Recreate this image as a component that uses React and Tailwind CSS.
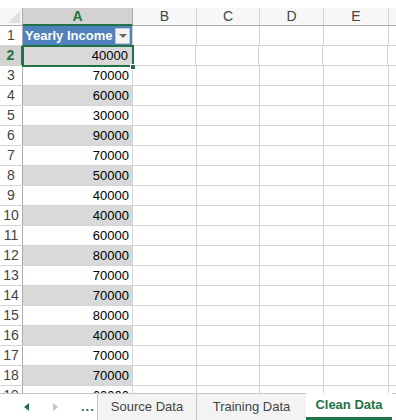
import React from "react";

const values = [
  40000, 70000, 60000, 30000, 90000, 70000, 50000, 40000, 40000, 60000, 80000,
  70000, 70000, 80000, 40000, 70000, 70000, 60000,
];

const cols = ["B", "C", "D", "E"];
const colWidths = ["w-[64px]", "w-[63px]", "w-[64px]", "w-[65px]"];

const HeaderRow = () => (
  <div className="flex h-[18px] shrink-0 border-b border-[#ababab] bg-[#f7f7f7]">
    <div className="relative w-[23px] shrink-0 border-r border-[#ababab]">
      <div className="absolute right-[2px] bottom-[2px] w-0 h-0 border-l-[12px] border-l-transparent border-b-[12px] border-b-[#dfdfdf]" />
    </div>
    <div className="w-[110px] shrink-0 flex items-center justify-center bg-[#d2d2d2] text-[#217346] font-bold border-r border-[#ababab] border-b-2 border-b-[#217346] -mb-px text-[14px]">
      A
    </div>
    {cols.map((c, i) => (
      <div
        key={c}
        className={`${colWidths[i]} shrink-0 flex items-center justify-center border-r border-[#d4d4d4] text-[#444] text-[14px]`}
      >
        {c}
      </div>
    ))}
    <div className="flex-1" />
  </div>
);

const Row = ({ num, children, striped, active }) => (
  <div className="flex h-[20px] shrink-0 border-b border-[#d4d4d4]">
    <div
      className={`w-[23px] shrink-0 flex items-center justify-center text-[14px] border-r ${
        active
          ? "bg-[#d2d2d2] text-[#217346] font-bold border-r-2 border-r-[#217346] -mr-px"
          : "text-[#444] border-[#ababab]"
      }`}
    >
      {num}
    </div>
    <div
      className={`w-[110px] shrink-0 border-r border-[#d4d4d4] ${
        striped ? "bg-[#d9d9d9]" : "bg-white"
      }`}
    >
      {children}
    </div>
    {colWidths.map((w, i) => (
      <div key={i} className={`${w} shrink-0 border-r border-[#d4d4d4]`} />
    ))}
    <div className="flex-1" />
  </div>
);

const App = () => {
  return (
    <div
      className="w-[396px] h-[420px] bg-white overflow-hidden flex flex-col pt-[8px]"
      style={{ fontFamily: '"Liberation Sans", Arial, sans-serif' }}
    >
      <div className="relative flex-1 flex flex-col overflow-hidden">
        <HeaderRow />
        <Row num={1}>
          <div className="h-full flex items-center justify-between bg-[#4f81bd] pl-[2px] pr-[2px]">
            <span className="text-white font-bold text-[13px] leading-none">Yearly Income</span>
            <span className="w-[15px] h-[16px] bg-[#f2f2f2] border border-[#c8c8c8] flex items-center justify-center">
              <span className="w-0 h-0 border-l-[4px] border-r-[4px] border-t-[4px] border-l-transparent border-r-transparent border-t-[#666]" />
            </span>
          </div>
        </Row>
        {values.map((v, i) => (
          <Row key={i} num={i + 2} striped={i % 2 === 0} active={i === 0}>
            <div className="h-full flex items-center justify-end pr-[3px] text-[13px] text-black">
              {v}
            </div>
          </Row>
        ))}
        {/* selection border on A2 */}
        <div className="absolute left-[22px] top-[37px] w-[112px] h-[22px] border-2 border-[#217346] pointer-events-none" />
        <div className="absolute left-[130px] top-[56px] w-[6px] h-[6px] bg-[#217346] border border-white pointer-events-none" />
      </div>

      <div className="h-[27px] shrink-0 flex items-stretch border-t border-[#c6c6c6] bg-[#f3f3f3] text-[13px]">
        <div className="w-[97px] shrink-0 flex items-center bg-white">
          <span className="ml-[24px] w-0 h-0 border-t-[4px] border-b-[4px] border-r-[5px] border-t-transparent border-b-transparent border-r-[#217346]" />
          <span className="ml-[24px] w-0 h-0 border-t-[4px] border-b-[4px] border-l-[5px] border-t-transparent border-b-transparent border-l-[#c4c4c4]" />
          <span className="ml-[23px] text-[#217346] font-bold tracking-[1px] leading-none -mt-[2px]">...</span>
        </div>
        <div className="w-[99px] shrink-0 flex items-center justify-center border-l border-[#c6c6c6] text-[#444]">
          Source Data
        </div>
        <div className="w-[110px] shrink-0 flex items-center justify-center border-l border-[#c6c6c6] text-[#444]">
          Training Data
        </div>
        <div className="w-[86px] shrink-0 flex items-center justify-center bg-white border-b-[3px] border-[#217346] text-[#217346] font-bold -mt-px">
          Clean Data
        </div>
        <div className="flex-1 bg-white" />
      </div>
    </div>
  );
};

export default App;
